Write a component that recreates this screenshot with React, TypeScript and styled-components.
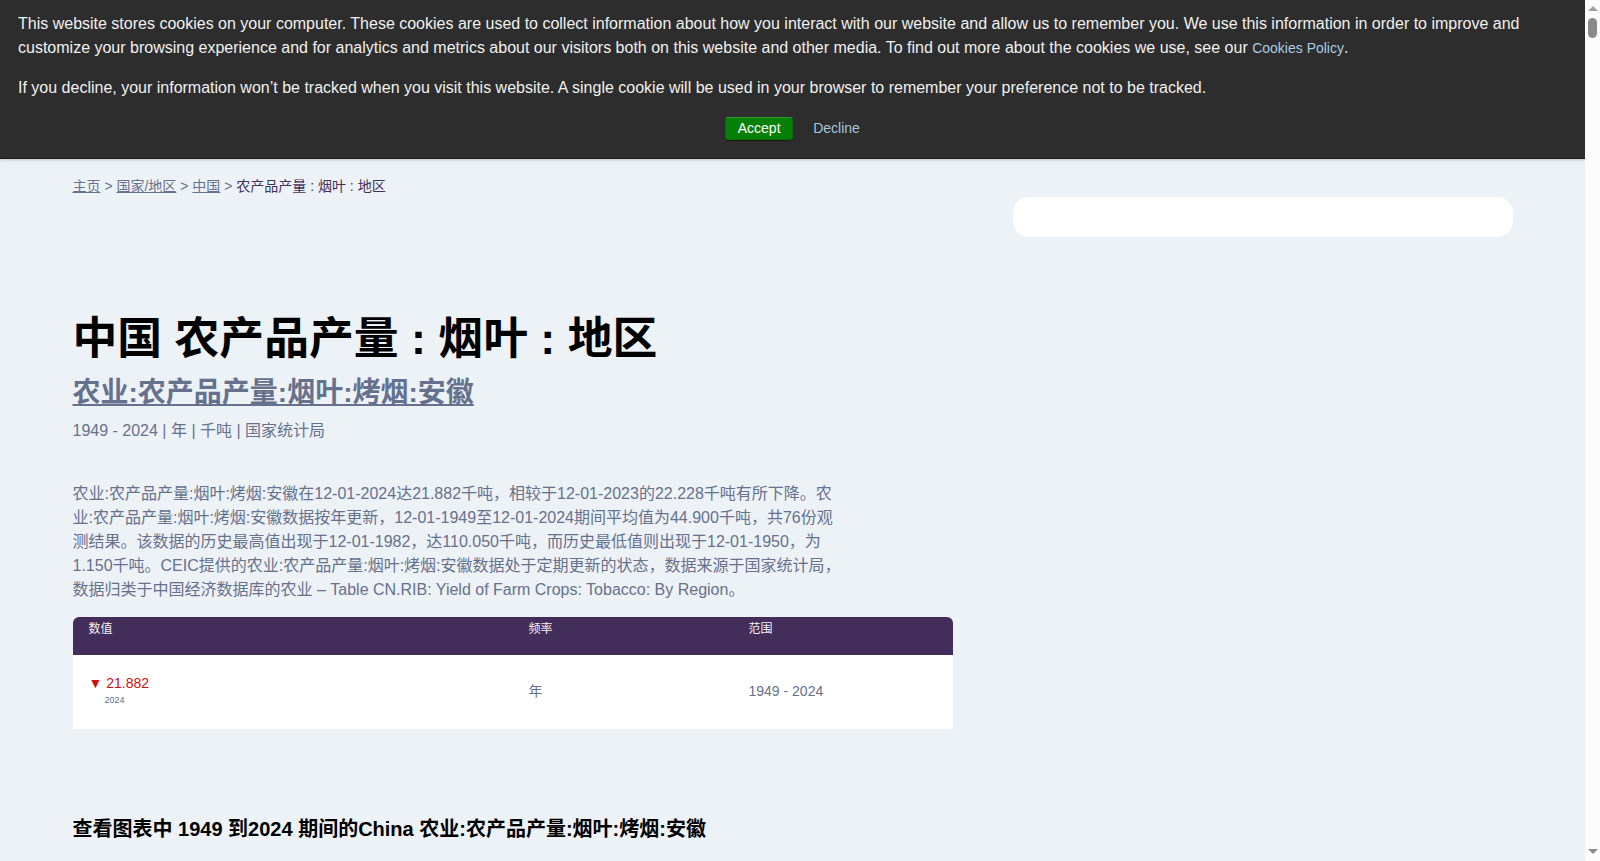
import * as React from 'react';
import styled, { createGlobalStyle } from 'styled-components';

const Global = createGlobalStyle`
  html, body { margin: 0; padding: 0; height: 100%; overflow: hidden; }
  body {
    font-family: "Liberation Sans", "Noto Sans CJK SC", Arial, sans-serif;
    background: #edf2f7;
    text-spacing-trim: space-all;
  }
`;

const Shell = styled.div`
  display: flex;
  height: 861px;
  overflow: hidden;
`;

const Page = styled.div`
  flex: 1;
  min-width: 0;
  overflow: hidden;
`;

const Rail = styled.div`
  width: 15px;
  flex: none;
  background: #fcfcfc;
  display: flex;
  flex-direction: column;
  align-items: center;
  padding: 6px 0 7px;
  box-sizing: border-box;
`;

const Thumb = styled.div`
  width: 9px;
  height: 20px;
  border-radius: 5px;
  background: #8a8a8a;
  margin-top: 7px;
`;

const Arrow = styled.div<{ $down?: boolean }>`
  width: 0;
  height: 0;
  border-left: 5px solid transparent;
  border-right: 5px solid transparent;
  ${(p) => (p.$down ? 'border-top: 5px solid #8a8a8a; margin-top: auto;' : 'border-bottom: 5px solid #a0a0a0;')}
`;

const Banner = styled.div`
  background: #2d2d2d;
  color: #f0f0f0;
  height: 159px;
  box-sizing: border-box;
  padding: 12px 18px 0;
  font-size: 16px;
  line-height: 24px;
  border-bottom: 1px solid #1a1a1a;
  box-shadow: 0 1px 3px rgba(0, 0, 0, 0.2);
`;

const BannerText = styled.p`
  margin: 0 0 16px;
`;

const PolicyLink = styled.a`
  color: #a8cde0;
  font-size: 14px;
`;

const BannerActions = styled.div`
  display: flex;
  justify-content: center;
  align-items: center;
  gap: 20px;
  margin-top: 16px;
`;

const AcceptButton = styled.button`
  height: 23px;
  width: 68px;
  padding: 0;
  border: 1px solid #0a6b0a;
  border-top-color: #2f9a2f;
  border-radius: 3px;
  background: #068006;
  color: #fff;
  font: 14px "Liberation Sans", sans-serif;
  box-shadow: 0 1px 1px rgba(0, 0, 0, 0.4);
`;

const DeclineLink = styled.a`
  color: #a5c6d8;
  font-size: 14px;
`;

const Content = styled.main`
  padding: 19px 72px 0 72.5px;
  display: grid;
  grid-template-columns: 880.5px 500px;
  column-gap: 60px;
`;

const Breadcrumb = styled.div`
  font-size: 14px;
  line-height: 16px;
  color: #66718e;
`;

const Crumb = styled.a`
  color: #66718e;
  text-decoration: underline;
`;

const CurrentCrumb = styled.span`
  color: #42305c;
`;

const SearchPill = styled.div`
  height: 40px;
  width: 500px;
  margin-top: 19px;
  background: #fff;
  border-radius: 16px;
`;

const Title = styled.h1`
  margin: 116px 0 0;
  font-size: 44.8px;
  line-height: 56px;
  font-weight: 700;
  color: #000;
`;

const SubTitle = styled.a`
  display: block;
  margin-top: 10px;
  font-size: 28px;
  line-height: 34px;
  font-weight: 700;
  color: #66718e;
  text-decoration: underline;
`;

const Meta = styled.div`
  margin-top: 9px;
  font-size: 16px;
  line-height: 24px;
  color: #66718e;
`;

const Description = styled.p`
  margin: 39px 0 0;
  width: 770px;
  font-size: 16px;
  line-height: 24px;
  color: #66718e;
`;

const Table = styled.div`
  margin-top: 15px;
  width: 880.5px;
  background: #fff;
  border-radius: 6px 6px 0 0;
  overflow: hidden;
`;

const Row = styled.div<{ $head?: boolean }>`
  display: grid;
  grid-template-columns: 440px 220px 220.5px;
  height: ${(p) => (p.$head ? '38px' : '74px')};
  background: ${(p) => (p.$head ? '#432d5b' : '#fff')};
  color: ${(p) => (p.$head ? '#f3f0f6' : '#66718e')};
  font-size: ${(p) => (p.$head ? '12px' : '14px')};
  align-items: ${(p) => (p.$head ? 'start' : 'center')};
`;

const Cell = styled.div<{ $head?: boolean }>`
  padding: ${(p) => (p.$head ? '4px 16px 0' : '0 16px 3px')};
  line-height: 16px;
`;

const ValueLine = styled.div`
  color: #d01010;
  font-size: 14px;
  line-height: 16px;
`;

const ValueYear = styled.div`
  color: #66718e;
  font-size: 9px;
  line-height: 12px;
  margin: 3px 0 0 16px;
`;

const ChartHeading = styled.h2`
  margin: 86px 0 0;
  font-size: 20px;
  line-height: 28px;
  font-weight: 700;
  color: #000;
`;

const App: React.FC = () => (
  <Shell>
    <Global />
    <Page>
      <Banner>
        <BannerText>
          This website stores cookies on your computer. These cookies are used to collect information about how you interact with our website and allow us to remember you. We use this information in order to improve and customize your browsing experience and for analytics and metrics about our visitors both on this website and other media. To find out more about the cookies we use, see our <PolicyLink>Cookies Policy</PolicyLink>.
        </BannerText>
        <BannerText>
          If you decline, your information won’t be tracked when you visit this website. A single cookie will be used in your browser to remember your preference not to be tracked.
        </BannerText>
        <BannerActions>
          <AcceptButton>Accept</AcceptButton>
          <DeclineLink>Decline</DeclineLink>
        </BannerActions>
      </Banner>
      <Content>
        <div>
          <Breadcrumb>
            <Crumb>主页</Crumb> &gt; <Crumb>国家/地区</Crumb> &gt; <Crumb>中国</Crumb> &gt; <CurrentCrumb>农产品产量 : 烟叶 : 地区</CurrentCrumb>
          </Breadcrumb>
          <Title>中国 农产品产量 : 烟叶 : 地区</Title>
          <SubTitle>农业:农产品产量:烟叶:烤烟:安徽</SubTitle>
          <Meta>1949 - 2024 | 年 | 千吨 | 国家统计局</Meta>
          <Description>
            农业:农产品产量:烟叶:烤烟:安徽在12-01-2024达21.882千吨，相较于12-01-2023的22.228千吨有所下降。农业:农产品产量:烟叶:烤烟:安徽数据按年更新，12-01-1949至12-01-2024期间平均值为44.900千吨，共76份观测结果。该数据的历史最高值出现于12-01-1982，达110.050千吨，而历史最低值则出现于12-01-1950，为1.150千吨。CEIC提供的农业:农产品产量:烟叶:烤烟:安徽数据处于定期更新的状态，数据来源于国家统计局，数据归类于中国经济数据库的农业 – Table CN.RIB: Yield of Farm Crops: Tobacco: By Region。
          </Description>
          <Table>
            <Row $head>
              <Cell $head>数值</Cell>
              <Cell $head>频率</Cell>
              <Cell $head>范围</Cell>
            </Row>
            <Row>
              <Cell>
                <ValueLine>▼ 21.882</ValueLine>
                <ValueYear>2024</ValueYear>
              </Cell>
              <Cell>年</Cell>
              <Cell>1949 - 2024</Cell>
            </Row>
          </Table>
          <ChartHeading>查看图表中 1949 到2024 期间的China 农业:农产品产量:烟叶:烤烟:安徽</ChartHeading>
        </div>
        <aside>
          <SearchPill />
        </aside>
      </Content>
    </Page>
    <Rail>
      <Arrow />
      <Thumb />
      <Arrow $down />
    </Rail>
  </Shell>
);

export default App;
